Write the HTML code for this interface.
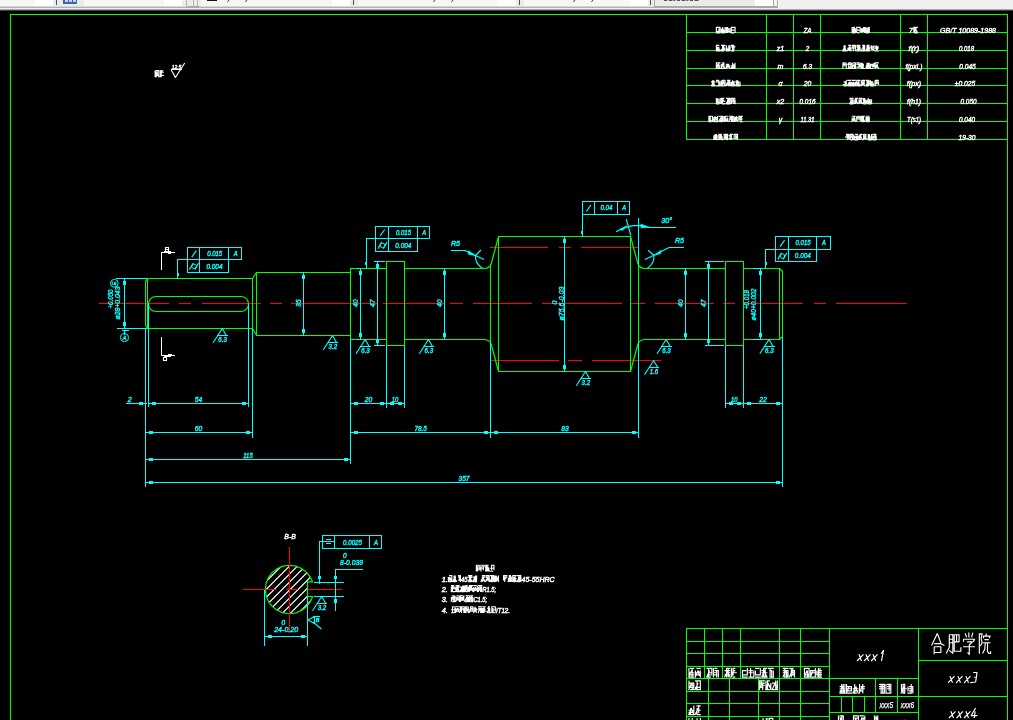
<!DOCTYPE html>
<html><head><meta charset="utf-8"><title>shaft drawing</title>
<style>
html,body{margin:0;padding:0;background:#000;overflow:hidden}
svg{display:block;will-change:transform;font-family:"Liberation Sans",sans-serif;font-style:italic}
.k{fill:none;stroke-width:1;shape-rendering:crispEdges}
.a{fill:none;stroke-width:1.15;stroke-linecap:butt;stroke-linejoin:round}
</style></head><body>
<svg width="1013" height="720" viewBox="0 0 1013 720">
<rect width="1013" height="720" fill="#000"/>
<rect x="0" y="0" width="1013" height="9" fill="#f0f0f0"/>
<rect x="0" y="0" width="53" height="6" fill="#f7f7f7"/>
<rect x="35" y="0" width="18" height="6" fill="#ffffff"/>
<rect x="84" y="0" width="98" height="6" fill="#f7f7f7"/>
<rect x="164" y="0" width="18" height="6" fill="#ffffff"/>
<rect x="201" y="0" width="149" height="6" fill="#f7f7f7"/>
<rect x="332" y="0" width="18" height="6" fill="#ffffff"/>
<rect x="358" y="0" width="158" height="6" fill="#f7f7f7"/>
<rect x="498" y="0" width="18" height="6" fill="#ffffff"/>
<rect x="524" y="0" width="124" height="6" fill="#f7f7f7"/>
<rect x="630" y="0" width="18" height="6" fill="#ffffff"/>
<rect x="0" y="6" width="778" height="1" fill="#d6d8da"/>
<rect x="0" y="7" width="778" height="1" fill="#b0b0b0"/>
<rect x="0" y="8" width="778" height="1" fill="#ececec"/>
<rect x="53" y="0" width="31" height="6" fill="#ececec"/>
<rect x="182" y="0" width="19" height="6" fill="#ececec"/>
<rect x="350" y="0" width="8" height="6" fill="#ececec"/>
<rect x="516" y="0" width="8" height="6" fill="#ececec"/>
<rect x="648" y="0" width="7" height="6" fill="#ececec"/>
<rect x="56" y="0" width="1" height="5" fill="#505050"/>
<rect x="353" y="0" width="1" height="5" fill="#505050"/>
<rect x="519" y="0" width="1" height="5" fill="#505050"/>
<rect x="650" y="0" width="1" height="5" fill="#505050"/>
<rect x="186" y="0" width="1" height="7" fill="#b4b4b4"/>
<rect x="193" y="0" width="1" height="7" fill="#b4b4b4"/>
<rect x="197" y="0" width="1" height="7" fill="#b4b4b4"/>
<rect x="188" y="6" width="11" height="2" fill="#a8a8a8"/>
<rect x="655" y="0" width="100" height="6" fill="#ebebeb"/><rect x="755" y="0" width="19" height="6" fill="#ffffff"/>
<rect x="654" y="0" width="1" height="7" fill="#a8a8a8"/><rect x="773" y="0" width="1" height="7" fill="#a8a8a8"/><rect x="777" y="0" width="1" height="8" fill="#a8a8a8"/><rect x="654" y="6" width="124" height="2" fill="#a8a8a8"/>
<rect x="774" y="0" width="3" height="6" fill="#f6f6f6"/><rect x="778" y="0" width="1" height="9" fill="#fbfbfb"/>
<rect x="63" y="0" width="14" height="4" fill="#3f62a0"/><rect x="65" y="0" width="3" height="2" fill="#c4d8f6"/><rect x="69" y="0" width="3" height="2" fill="#c4d8f6"/><rect x="73" y="0" width="3" height="2" fill="#c4d8f6"/>
<rect x="207" y="0" width="10" height="1" fill="#111"/>
<path d="M229 0l-1.6 2" stroke="#444" stroke-width="1" fill="none"/>
<path d="M247 0l-1.6 2" stroke="#444" stroke-width="1" fill="none"/>
<path d="M435 0l-1.6 2" stroke="#444" stroke-width="1" fill="none"/>
<path d="M453 0l-1.6 2" stroke="#444" stroke-width="1" fill="none"/>
<path d="M575 0l-1.6 2" stroke="#444" stroke-width="1" fill="none"/>
<path d="M593 0l-1.6 2" stroke="#444" stroke-width="1" fill="none"/>
<path d="M664 0.5H699" stroke="#555" stroke-width="1" stroke-dasharray="3 1.5 4 1 2 1.5"/>
<rect x="0" y="9" width="1013" height="1" fill="#a8a8a8"/>
<rect x="0" y="10" width="1013" height="1" fill="#404040"/>
<path class="k" stroke="#00ff00" d="M10 14.5H1008"/>
<path class="k" stroke="#00ff00" d="M10.5 14V720"/>
<path class="k" stroke="#00ff00" d="M1007.5 14V720"/>
<path class="k" stroke="#00ff00" d="M686 32.5H1008"/>
<path class="k" stroke="#00ff00" d="M686 50.5H1008"/>
<path class="k" stroke="#00ff00" d="M686 68.5H1008"/>
<path class="k" stroke="#00ff00" d="M686 85.5H1008"/>
<path class="k" stroke="#00ff00" d="M686 103.5H1008"/>
<path class="k" stroke="#00ff00" d="M686 121.5H1008"/>
<path class="k" stroke="#00ff00" d="M686 139.5H1008"/>
<path class="k" stroke="#00ff00" d="M686.5 14V140"/>
<path class="k" stroke="#00ff00" d="M766.5 14V140"/>
<path class="k" stroke="#00ff00" d="M793.5 14V140"/>
<path class="k" stroke="#00ff00" d="M820.5 14V140"/>
<path class="k" stroke="#00ff00" d="M900.5 14V140"/>
<path class="k" stroke="#00ff00" d="M927.5 14V140"/>
<path class="a" stroke="#ffffff" stroke-width="1" d="M716 27.34H720.4M716 31.48H719.3M716 32.86H720.4M718.82 28.6V33.1M716.35 27.1V33.1M720.05 27.1V31.9M721 30.1H725.4M721 31.48H724.3M721 32.86H724.3M722.58 27.1V31.9M725.05 27.1V33.1M721.35 28.6V33.1M723.42 28.6L721 33.1M722.98 29.2L725.4 33.1M726 28.72H730.4M726 30.1H729.3M727.1 31.48H730.4M730.05 28.6V33.1M726.35 27.1V33.1M727.58 27.1V33.1M728.42 28.6L726 33.1M731 27.34H735.4M731 30.1H734.3M731 32.86H734.3M731.35 27.1V33.1M735.05 27.1V33.1"/>
<path class="a" stroke="#ffffff" stroke-width="1" d="M716 45.44H719.3M716 48.2H719.3M717.1 49.58H720.4M716 50.96H720.4M717.58 46.7V51.2M716.35 45.2V50M718.82 46.7V50M718.42 46.7L716 51.2M717.98 47.3L720.4 51.2M721 45.44H725.4M722.1 48.2H725.4M721 49.58H725.4M721 50.96H724.3M722.58 45.2V51.2M723.82 45.2V50M723.42 46.7L721 51.2M726 48.2H729.3M726 49.58H730.4M726 50.96H729.3M726.35 45.2V51.2M730.05 45.2V51.2M728.82 45.2V51.2M731 45.44H734.3M731 46.82H735.4M731 50.96H734.3M733.82 45.2V51.2M732.58 45.2V51.2"/>
<path class="a" stroke="#ffffff" stroke-width="1" d="M716 62.94H720.4M716 65.7H720.4M716 68.46H719.3M717.58 64.2V67.5M718.82 62.7V68.7M716.35 62.7V68.7M718.42 64.2L716 68.7M717.98 64.8L720.4 68.7M722.1 62.94H724.3M721 64.32H724.3M721 68.46H725.4M721.35 64.2V68.7M723.82 62.7V68.7M723.42 64.2L721 68.7M722.98 64.8L725.4 68.7M726 64.32H729.3M727.1 65.7H730.4M727.1 67.08H730.4M726.35 64.2V68.7M727.58 64.2V67.5M728.42 64.2L726 68.7M727.98 64.8L730.4 68.7M731 65.7H734.3M732.1 67.08H735.4M731 68.46H734.3M733.82 64.2V68.7M732.58 62.7V68.7M735.05 62.7V68.7M733.42 64.2L731 68.7M732.98 64.8L735.4 68.7"/>
<path class="a" stroke="#ffffff" stroke-width="1" d="M711 81.82H715.4M712.1 83.2H714.3M711 85.96H715.4M712.58 80.2V86.2M713.82 80.2V86.2M713.42 81.7L711 86.2M712.98 82.3L715.4 86.2M716 80.44H719.3M716 81.82H720.4M716 85.96H720.4M720.05 81.7V86.2M718.82 81.7V86.2M722.1 80.44H725.4M722.1 81.82H724.3M722.1 83.2H725.4M721 85.96H724.3M722.58 80.2V85M725.05 80.2V86.2M721.35 80.2V86.2M723.42 81.7L721 86.2M722.98 82.3L725.4 86.2M727.1 80.44H730.4M727.1 81.82H730.4M726 83.2H729.3M726 84.58H730.4M730.05 81.7V86.2M728.82 80.2V86.2M728.42 81.7L726 86.2M727.98 82.3L730.4 86.2M732.1 81.82H735.4M732.1 84.58H735.4M731 85.96H734.3M733.82 81.7V85M732.58 80.2V85M731.35 81.7V85M733.42 81.7L731 86.2M732.98 82.3L735.4 86.2M736 81.82H739.3M736 83.2H739.3M737.1 84.58H739.3M736 85.96H740.4M737.58 80.2V85M740.05 81.7V86.2M736.35 80.2V86.2M738.42 81.7L736 86.2"/>
<path class="a" stroke="#ffffff" stroke-width="1" d="M716 99.72H719.3M716 101.1H719.3M716 102.48H720.4M716 103.86H719.3M720.05 98.1V104.1M716.35 98.1V104.1M717.58 98.1V102.9M721 98.34H724.3M721 101.1H725.4M722.1 103.86H725.4M721.35 98.1V104.1M722.58 98.1V102.9M723.42 99.6L721 104.1M726 98.34H730.4M727.1 99.72H730.4M727.1 101.1H729.3M726 103.86H730.4M727.58 99.6V104.1M730.05 98.1V104.1M728.82 98.1V104.1M728.42 99.6L726 104.1M727.98 100.2L730.4 104.1M731 98.34H735.4M732.1 99.72H734.3M732.1 101.1H735.4M735.05 99.6V104.1M733.82 98.1V104.1M731.35 98.1V104.1M733.42 99.6L731 104.1M732.98 100.2L735.4 104.1"/>
<path class="a" stroke="#ffffff" stroke-width="1" d="M708.5 116.24H712.9M708.5 120.38H711.8M708.5 121.76H711.8M710.08 116V120.8M708.85 116V122M712.55 116V122M710.92 117.5L708.5 122M713.5 117.62H717.9M714.6 119H716.8M713.5 121.76H717.9M717.55 116V120.8M715.08 116V122M713.85 117.5V122M715.92 117.5L713.5 122M715.48 118.1L717.9 122M718.5 116.24H722.9M719.6 120.38H722.9M719.6 121.76H721.8M721.32 116V122M722.55 116V122M720.92 117.5L718.5 122M720.48 118.1L722.9 122M724.6 116.24H727.9M723.5 119H726.8M723.5 120.38H727.9M723.85 116V122M727.55 117.5V122M725.08 116V122M725.92 117.5L723.5 122M725.48 118.1L727.9 122M728.5 116.24H732.9M729.6 117.62H732.9M728.5 119H732.9M731.32 116V122M732.55 116V122M730.92 117.5L728.5 122M730.48 118.1L732.9 122M734.6 117.62H737.9M733.5 119H737.9M734.6 120.38H737.9M733.85 116V120.8M736.32 116V120.8M735.08 117.5V122M735.92 117.5L733.5 122M735.48 118.1L737.9 122M738.5 116.24H742.9M738.5 117.62H741.8M739.6 119H742.9M739.6 121.76H742.9M738.85 116V120.8M740.08 116V120.8M741.32 116V120.8"/>
<path class="a" stroke="#ffffff" stroke-width="1" d="M713.5 135.72H717.9M713.5 137.1H717.9M714.6 138.48H716.8M715.08 134.1V140.1M716.32 134.1V140.1M713.85 135.6V140.1M715.92 135.6L713.5 140.1M715.48 136.2L717.9 140.1M718.5 134.34H721.8M719.6 135.72H721.8M718.5 137.1H722.9M721.32 134.1V140.1M718.85 134.1V140.1M720.08 134.1V140.1M720.92 135.6L718.5 140.1M720.48 136.2L722.9 140.1M723.5 134.34H727.9M723.5 135.72H726.8M723.5 137.1H727.9M723.5 138.48H727.9M726.32 134.1V140.1M725.08 134.1V138.9M727.55 134.1V138.9M725.92 135.6L723.5 140.1M725.48 136.2L727.9 140.1M729.6 134.34H732.9M728.5 135.72H731.8M728.5 138.48H732.9M730.08 134.1V140.1M731.32 134.1V140.1M733.5 134.34H737.9M733.5 135.72H736.8M733.5 137.1H736.8M733.5 138.48H737.9M737.55 134.1V140.1M736.32 135.6V138.9"/>
<text x="807.5" y="33.1" fill="#ffffff" stroke="#ffffff" stroke-width="0.42" font-size="7" text-anchor="middle" textLength="8" lengthAdjust="spacingAndGlyphs">ZA</text>
<text x="911" y="33.1" fill="#ffffff" stroke="#ffffff" stroke-width="0.42" font-size="7" text-anchor="middle">7</text>
<path class="a" stroke="#ffffff" stroke-width="1" d="M913.5 27.34H917.9M913.5 28.72H916.8M914.6 32.86H917.9M913.85 27.1V33.1M915.08 27.1V33.1M915.92 28.6L913.5 33.1M915.48 29.2L917.9 33.1"/>
<text x="968" y="33.1" fill="#ffffff" stroke="#ffffff" stroke-width="0.42" font-size="7" text-anchor="middle" textLength="56" lengthAdjust="spacingAndGlyphs">GB/T 10089-1988</text>
<path class="a" stroke="#ffffff" stroke-width="1" d="M852.8 27.34H854.8M852.8 28.72H855.8M851.8 31.48H855.8M851.8 32.86H854.8M852.12 27.1V31.9M854.36 27.1V31.9M855.48 28.6V33.1M854 28.6L851.8 33.1M853.6 29.2L855.8 33.1M856.4 27.34H860.4M856.4 30.1H859.4M857.4 32.86H859.4M860.08 27.1V31.9M856.72 27.1V33.1M861 28.72H865M861 30.1H864M861 31.48H865M861.32 28.6V31.9M864.68 27.1V33.1M863.56 27.1V31.9M863.2 28.6L861 33.1M865.6 28.72H869.6M865.6 31.48H868.6M865.6 32.86H868.6M868.16 27.1V33.1M869.28 27.1V31.9M865.92 27.1V33.1M867.8 28.6L865.6 33.1M867.4 29.2L869.6 33.1"/>
<text x="780.5" y="51.2" fill="#ffffff" stroke="#ffffff" stroke-width="0.42" font-size="7" text-anchor="middle">z1</text>
<text x="807.5" y="51.2" fill="#ffffff" stroke="#ffffff" stroke-width="0.42" font-size="7" text-anchor="middle" textLength="3.5" lengthAdjust="spacingAndGlyphs">2</text>
<text x="914" y="51.2" fill="#ffffff" stroke="#ffffff" stroke-width="0.42" font-size="7" text-anchor="middle" textLength="11" lengthAdjust="spacingAndGlyphs">f(r)</text>
<text x="966.5" y="51.2" fill="#ffffff" stroke="#ffffff" stroke-width="0.42" font-size="7" text-anchor="middle" textLength="15" lengthAdjust="spacingAndGlyphs">0.018</text>
<path class="a" stroke="#ffffff" stroke-width="1" d="M843.6 46.82H845.6M842.6 49.58H845.6M842.6 50.96H846.6M844.04 45.2V51.2M845.16 45.2V51.2M844.8 46.7L842.6 51.2M844.4 47.3L846.6 51.2M848.2 45.44H851.2M847.2 48.2H851.2M848.2 49.58H851.2M849.76 45.2V51.2M850.88 46.7V50M849.4 46.7L847.2 51.2M849 47.3L851.2 51.2M851.8 45.44H855.8M851.8 46.82H855.8M851.8 48.2H854.8M853.24 45.2V51.2M855.48 45.2V51.2M856.4 45.44H860.4M856.4 46.82H860.4M856.4 49.58H860.4M856.4 50.96H859.4M860.08 46.7V51.2M858.96 45.2V50M857.84 45.2V51.2M862 45.44H865M862 48.2H864M861 50.96H865M864.68 45.2V51.2M863.56 45.2V51.2M863.2 46.7L861 51.2M866.6 45.44H869.6M866.6 46.82H869.6M866.6 49.58H869.6M865.6 50.96H869.6M869.28 46.7V51.2M867.04 45.2V50M868.16 45.2V51.2M867.8 46.7L865.6 51.2M867.4 47.3L869.6 51.2M870.2 46.82H874.2M870.2 48.2H873.2M871.2 49.58H873.2M873.88 45.2V51.2M871.64 45.2V50M874.8 46.82H878.8M874.8 48.2H878.8M874.8 50.96H878.8M876.24 45.2V50M877.36 46.7V50"/>
<text x="780.5" y="68.7" fill="#ffffff" stroke="#ffffff" stroke-width="0.42" font-size="7" text-anchor="middle">m</text>
<text x="807.5" y="68.7" fill="#ffffff" stroke="#ffffff" stroke-width="0.42" font-size="7" text-anchor="middle" textLength="9" lengthAdjust="spacingAndGlyphs">6.3</text>
<text x="914" y="68.7" fill="#ffffff" stroke="#ffffff" stroke-width="0.42" font-size="7" text-anchor="middle" textLength="17" lengthAdjust="spacingAndGlyphs">f(pxL)</text>
<text x="967.5" y="68.7" fill="#ffffff" stroke="#ffffff" stroke-width="0.42" font-size="7" text-anchor="middle" textLength="16.5" lengthAdjust="spacingAndGlyphs">0.045</text>
<path class="a" stroke="#ffffff" stroke-width="1" d="M842.6 62.94H845.6M842.6 64.32H845.6M843.6 65.7H845.6M846.28 62.7V68.7M842.92 62.7V68.7M848.2 62.94H851.2M847.2 64.32H851.2M848.2 67.08H851.2M847.2 68.46H851.2M848.64 62.7V68.7M850.88 62.7V68.7M852.8 62.94H855.8M852.8 65.7H855.8M851.8 68.46H855.8M854.36 64.2V68.7M855.48 62.7V67.5M852.12 62.7V68.7M854 64.2L851.8 68.7M853.6 64.8L855.8 68.7M856.4 62.94H859.4M856.4 64.32H860.4M856.4 67.08H860.4M858.96 64.2V67.5M860.08 62.7V67.5M861 64.32H864M862 65.7H864M861 67.08H864M861 68.46H865M861.32 62.7V68.7M862.44 62.7V68.7M863.2 64.2L861 68.7M865.6 65.7H869.6M865.6 67.08H869.6M865.6 68.46H868.6M869.28 62.7V68.7M868.16 62.7V67.5M867.04 62.7V68.7M867.8 64.2L865.6 68.7M867.4 64.8L869.6 68.7M870.2 64.32H873.2M870.2 65.7H874.2M870.2 68.46H873.2M872.76 64.2V67.5M873.88 62.7V67.5M870.52 64.2V68.7M874.8 62.94H878.8M875.8 65.7H877.8M874.8 67.08H877.8M875.12 62.7V67.5M877.36 64.2V67.5M877 64.2L874.8 68.7M876.6 64.8L878.8 68.7"/>
<text x="780.5" y="86.2" fill="#ffffff" stroke="#ffffff" stroke-width="0.42" font-size="7" text-anchor="middle">α</text>
<text x="807.5" y="86.2" fill="#ffffff" stroke="#ffffff" stroke-width="0.42" font-size="7" text-anchor="middle" textLength="7.5" lengthAdjust="spacingAndGlyphs">20</text>
<text x="914" y="86.2" fill="#ffffff" stroke="#ffffff" stroke-width="0.42" font-size="7" text-anchor="middle" textLength="14.5" lengthAdjust="spacingAndGlyphs">f(px)</text>
<text x="965" y="86.2" fill="#ffffff" stroke="#ffffff" stroke-width="0.42" font-size="7" text-anchor="middle" textLength="20.5" lengthAdjust="spacingAndGlyphs">±0.025</text>
<path class="a" stroke="#ffffff" stroke-width="1" d="M843.6 81.82H845.6M842.6 84.58H846.6M843.6 85.96H846.6M846.28 80.2V85M845.16 81.7V86.2M847.2 80.44H851.2M847.2 84.58H851.2M848.2 85.96H851.2M850.88 81.7V86.2M849.76 81.7V86.2M849.4 81.7L847.2 86.2M849 82.3L851.2 86.2M851.8 80.44H855.8M851.8 84.58H855.8M851.8 85.96H854.8M852.12 81.7V86.2M855.48 81.7V85M854 81.7L851.8 86.2M853.6 82.3L855.8 86.2M856.4 80.44H860.4M856.4 84.58H860.4M857.4 85.96H860.4M857.84 81.7V85M858.96 80.2V86.2M856.72 80.2V85M858.6 81.7L856.4 86.2M858.2 82.3L860.4 86.2M862 80.44H865M861 81.82H865M862 83.2H865M862 84.58H864M863.56 81.7V85M861.32 80.2V86.2M863.2 81.7L861 86.2M862.8 82.3L865 86.2M865.6 80.44H868.6M865.6 84.58H869.6M865.6 85.96H868.6M868.16 80.2V86.2M869.28 80.2V85M867.04 80.2V86.2M870.2 81.82H873.2M871.2 83.2H874.2M870.2 84.58H874.2M870.2 85.96H874.2M871.64 81.7V85M870.52 80.2V85M872.4 81.7L870.2 86.2M874.8 80.44H878.8M874.8 81.82H878.8M874.8 83.2H878.8M875.12 80.2V85M878.48 81.7V85M877 81.7L874.8 86.2"/>
<text x="780.5" y="104.1" fill="#ffffff" stroke="#ffffff" stroke-width="0.42" font-size="7" text-anchor="middle">x2</text>
<text x="807.5" y="104.1" fill="#ffffff" stroke="#ffffff" stroke-width="0.42" font-size="7" text-anchor="middle" textLength="16" lengthAdjust="spacingAndGlyphs">0.016</text>
<text x="914" y="104.1" fill="#ffffff" stroke="#ffffff" stroke-width="0.42" font-size="7" text-anchor="middle" textLength="14" lengthAdjust="spacingAndGlyphs">f(h1)</text>
<text x="968.5" y="104.1" fill="#ffffff" stroke="#ffffff" stroke-width="0.42" font-size="7" text-anchor="middle" textLength="16" lengthAdjust="spacingAndGlyphs">0.050</text>
<path class="a" stroke="#ffffff" stroke-width="1" d="M849.5 98.34H853.5M849.5 99.72H853.5M849.5 102.48H852.5M849.5 103.86H853.5M852.06 99.6V104.1M853.18 99.6V104.1M851.7 99.6L849.5 104.1M851.3 100.2L853.5 104.1M855.1 98.34H858.1M854.1 99.72H857.1M854.1 101.1H857.1M856.66 98.1V102.9M855.54 98.1V104.1M856.3 99.6L854.1 104.1M855.9 100.2L858.1 104.1M858.7 98.34H862.7M858.7 99.72H862.7M859.7 102.48H862.7M859.02 99.6V104.1M861.26 99.6V104.1M860.9 99.6L858.7 104.1M860.5 100.2L862.7 104.1M864.3 101.1H867.3M863.3 102.48H867.3M863.3 103.86H866.3M863.62 98.1V104.1M864.74 98.1V102.9M866.98 99.6V102.9M865.5 99.6L863.3 104.1M865.1 100.2L867.3 104.1M867.9 99.72H871.9M867.9 102.48H871.9M867.9 103.86H870.9M871.58 99.6V102.9M868.22 98.1V104.1M870.1 99.6L867.9 104.1M869.7 100.2L871.9 104.1"/>
<text x="780.5" y="122" fill="#ffffff" stroke="#ffffff" stroke-width="0.42" font-size="7" text-anchor="middle">γ</text>
<text x="807.5" y="122" fill="#ffffff" stroke="#ffffff" stroke-width="0.42" font-size="7" text-anchor="middle" textLength="14" lengthAdjust="spacingAndGlyphs">11.31</text>
<text x="914" y="122" fill="#ffffff" stroke="#ffffff" stroke-width="0.42" font-size="7" text-anchor="middle" textLength="14" lengthAdjust="spacingAndGlyphs">T(s1)</text>
<text x="967" y="122" fill="#ffffff" stroke="#ffffff" stroke-width="0.42" font-size="7" text-anchor="middle" textLength="16" lengthAdjust="spacingAndGlyphs">0.040</text>
<path class="a" stroke="#ffffff" stroke-width="1" d="M851.8 116.24H855.8M851.8 119H855.8M851.8 120.38H855.8M854.36 116V120.8M852.12 117.5V122M854 117.5L851.8 122M853.6 118.1L855.8 122M857.4 116.24H860.4M856.4 117.62H859.4M856.4 119H860.4M856.72 116V122M860.08 116V120.8M861 116.24H865M861 120.38H864M862 121.76H864M861.32 116V122M862.44 116V120.8M863.56 116V122M863.2 117.5L861 122M862.8 118.1L865 122M865.6 116.24H869.6M865.6 117.62H869.6M866.6 120.38H869.6M866.6 121.76H869.6M865.92 117.5V120.8M868.16 117.5V120.8M869.28 117.5V122M867.8 117.5L865.6 122M867.4 118.1L869.6 122"/>
<text x="967" y="140.1" fill="#ffffff" stroke="#ffffff" stroke-width="0.42" font-size="7" text-anchor="middle" textLength="17" lengthAdjust="spacingAndGlyphs">19-30</text>
<path class="a" stroke="#ffffff" stroke-width="1" d="M845.9 134.34H848.9M845.9 135.72H847.9M844.9 137.1H848.9M847.46 134.1V140.1M848.58 134.1V138.9M849.5 134.34H853.5M849.5 135.72H853.5M849.5 137.1H853.5M850.5 139.86H852.5M853.18 134.1V138.9M849.82 134.1V138.9M851.7 135.6L849.5 140.1M851.3 136.2L853.5 140.1M855.1 134.34H858.1M854.1 137.1H858.1M854.1 139.86H858.1M856.66 135.6V140.1M854.42 135.6V138.9M857.78 135.6V138.9M856.3 135.6L854.1 140.1M855.9 136.2L858.1 140.1M859.7 134.34H862.7M858.7 135.72H861.7M859.7 137.1H861.7M860.14 134.1V140.1M859.02 135.6V140.1M860.9 135.6L858.7 140.1M860.5 136.2L862.7 140.1M864.3 134.34H866.3M863.3 135.72H866.3M864.3 137.1H866.3M863.3 138.48H867.3M865.86 134.1V140.1M863.62 134.1V138.9M865.5 135.6L863.3 140.1M868.9 137.1H871.9M867.9 138.48H870.9M867.9 139.86H871.9M871.58 134.1V140.1M868.22 134.1V140.1M869.34 134.1V140.1M870.1 135.6L867.9 140.1M872.5 134.34H876.5M872.5 137.1H876.5M872.5 139.86H876.5M872.82 135.6V140.1M876.18 135.6V140.1M875.06 134.1V138.9M874.7 135.6L872.5 140.1M874.3 136.2L876.5 140.1"/>
<path class="k" stroke="#00ff00" d="M686 628.5H830"/>
<path class="k" stroke="#00ff00" d="M686 641.5H830"/>
<path class="k" stroke="#00ff00" d="M686 653.5H830"/>
<path class="k" stroke="#00ff00" d="M686 666.5H830"/>
<path class="k" stroke="#00ff00" d="M686 678.5H830"/>
<path class="k" stroke="#00ff00" d="M686 691.5H830"/>
<path class="k" stroke="#00ff00" d="M686 703.5H830"/>
<path class="k" stroke="#00ff00" d="M686 716.5H830"/>
<path class="k" stroke="#00ff00" d="M829 628.5H1008"/>
<path class="k" stroke="#00ff00" d="M686.5 628V720"/>
<path class="k" stroke="#00ff00" d="M779.5 628V720"/>
<path class="k" stroke="#00ff00" d="M800.5 628V720"/>
<path class="k" stroke="#00ff00" d="M829.5 628V720"/>
<path class="k" stroke="#00ff00" d="M704.5 628V679"/>
<path class="k" stroke="#00ff00" d="M722.5 628V679"/>
<path class="k" stroke="#00ff00" d="M740.5 628V679"/>
<path class="k" stroke="#00ff00" d="M708.5 678V720"/>
<path class="k" stroke="#00ff00" d="M729.5 678V720"/>
<path class="k" stroke="#00ff00" d="M758.5 678V720"/>
<path class="k" stroke="#00ff00" d="M918.5 628V720"/>
<path class="k" stroke="#00ff00" d="M918 660.5H1008"/>
<path class="k" stroke="#00ff00" d="M829 678.5H919"/>
<path class="k" stroke="#00ff00" d="M829 696.5H1008"/>
<path class="k" stroke="#00ff00" d="M829 712.5H919"/>
<path class="k" stroke="#00ff00" d="M875.5 678V713"/>
<path class="k" stroke="#00ff00" d="M897.5 678V713"/>
<path class="k" stroke="#00ff00" d="M841.5 696V713"/>
<path class="k" stroke="#00ff00" d="M852.5 696V713"/>
<path class="k" stroke="#00ff00" d="M864.5 696V713"/>
<path class="a" stroke="#ffffff" stroke-width="1.15" d="M858.9 654.3L861.5 661M863.5 654.3L857 661M865.95 654.3L868.55 661M870.55 654.3L864.05 661M873 654.3L875.6 661M877.6 654.3L871.1 661M881.3 653.7L883.5 650.4L881.5 661"/>
<path class="a" stroke="#ffffff" stroke-width="1.15" d="M949.9 676.1L952.5 682.8M954.5 676.1L948 682.8M957.9 676.1L960.5 682.8M962.5 676.1L956 682.8M965.9 676.1L968.5 682.8M970.5 676.1L964 682.8M973.1 672.5L977 672.5L976.4 677.2L974.2 677.2M976.4 677.2L975.6 682L970 682.7"/>
<path class="a" stroke="#ffffff" stroke-width="1.15" d="M950.9 711.3L953.5 718M955.5 711.3L949 718M958.4 711.3L961 718M963 711.3L956.5 718M965.9 711.3L968.5 718M970.5 711.3L964 718M975.6 708L971.2 715.6L977.4 715.6M975.2 711.4L974.2 718"/>
<text x="886.3" y="707.8" fill="#ffffff" stroke="#ffffff" stroke-width="0.25" font-size="8.5" text-anchor="middle" textLength="13.5" lengthAdjust="spacingAndGlyphs">xxx5</text>
<text x="907.5" y="707.8" fill="#ffffff" stroke="#ffffff" stroke-width="0.25" font-size="8.5" text-anchor="middle" textLength="13.5" lengthAdjust="spacingAndGlyphs">xxx6</text>
<path class="a" stroke="#ffffff" stroke-width="1.1" d="M689.95 668.38H694.3M688.5 672.75H694.3M689.95 674.93H694.3M688.5 677.12H694.3M692.21 668V677.5M688.96 668V675.6M691.69 670.38L688.5 677.5M696.45 668.38H700.8M695 672.75H700.8M695 674.93H700.8M698.71 670.38V675.6M695.46 670.38V677.5M700.34 670.38V677.5M698.19 670.38L695 677.5M697.61 671.33L700.8 677.5"/>
<path class="a" stroke="#ffffff" stroke-width="1.1" d="M706.5 668.38H712.3M707.95 672.75H712.3M707.95 674.93H710.85M706.5 677.12H710.85M711.84 668V675.6M708.59 668V677.5M709.69 670.38L706.5 677.5M714.45 668.38H717.35M714.45 670.57H718.8M713 672.75H717.35M713 674.93H717.35M713.46 668V677.5M718.34 670.38V677.5M716.71 670.38V677.5"/>
<path class="a" stroke="#ffffff" stroke-width="1.1" d="M725.95 668.38H730.3M724.5 670.57H730.3M725.95 672.75H730.3M724.5 674.93H730.3M726.59 668V677.5M728.21 668V677.5M727.69 670.38L724.5 677.5M727.11 671.33L730.3 677.5M732.45 668.38H735.35M732.45 670.57H735.35M731 672.75H736.8M732.45 677.12H735.35M731.46 668V675.6M733.09 668V675.6M734.19 670.38L731 677.5"/>
<path class="a" stroke="#ffffff" stroke-width="1.1" d="M742 670.57H746.35M742 674.93H747.8M742 677.12H747.8M742.46 670.38V677.5M747.34 668V675.6M748.5 670.57H752.85M748.5 672.75H752.85M748.5 677.12H754.3M753.84 670.38V677.5M750.59 668V677.5M755 668.38H759.35M755 674.93H760.8M755 677.12H760.8M755.46 670.38V675.6M760.34 668V675.6M762.95 668.38H767.3M761.5 670.57H765.85M761.5 672.75H767.3M761.5 677.12H767.3M763.59 668V677.5M765.21 668V677.5M764.69 670.38L761.5 677.5M764.11 671.33L767.3 677.5M768 668.38H773.8M769.45 670.57H772.35M769.45 677.12H773.8M770.09 668V677.5M771.71 670.38V677.5M773.34 670.38V677.5"/>
<path class="a" stroke="#ffffff" stroke-width="1.1" d="M782.7 668.38H788.5M782.7 670.57H788.5M782.7 672.75H788.5M784.15 677.12H788.5M784.79 668V677.5M788.04 670.38V677.5M786.41 670.38V677.5M785.89 670.38L782.7 677.5M785.31 671.33L788.5 677.5M789.2 668.38H793.55M790.65 670.57H795M790.65 672.75H795M790.65 674.93H793.55M794.54 670.38V675.6M792.91 668V675.6M791.29 668V677.5M792.39 670.38L789.2 677.5M791.81 671.33L795 677.5"/>
<path class="a" stroke="#ffffff" stroke-width="1.1" d="M804 668.38H809.6M804 674.93H809.6M804 677.12H809.6M807.58 670.38V677.5M809.15 668V675.6M804.45 668V675.6M807.08 670.38L804 677.5M806.52 671.33L809.6 677.5M810.2 670.57H815.8M810.2 672.75H815.8M810.2 677.12H815.8M815.35 668V677.5M810.65 670.38V677.5M813.28 670.38L810.2 677.5M817.8 670.57H822M816.4 672.75H822M816.4 674.93H822M816.4 677.12H822M818.42 668V677.5M816.85 670.38V675.6M819.98 668V677.5"/>
<path class="a" stroke="#ffffff" stroke-width="1.1" d="M688.5 683.07H694.3M689.95 685.25H694.3M688.5 687.43H694.3M689.95 689.62H694.3M692.21 682.88V690M688.96 680.5V688.1M693.84 682.88V690M691.69 682.88L688.5 690M695 680.88H700.8M695 687.43H700.8M695 689.62H700.8M697.09 680.5V690M700.34 680.5V690M698.19 682.88L695 690"/>
<path class="a" stroke="#ffffff" stroke-width="1.1" d="M759 680.88H764.8M759 683.07H764.8M759 685.25H764.8M759 687.43H763.35M761.09 680.5V688.1M759.46 680.5V690M762.71 682.88V690M762.19 682.88L759 690M766.95 680.88H769.85M765.5 685.25H771.3M765.5 689.62H769.85M767.59 680.5V690M765.96 680.5V690M770.84 682.88V690M768.69 682.88L765.5 690M768.11 683.83L771.3 690M772 683.07H776.35M773.45 685.25H777.8M772 689.62H777.8M775.71 680.5V690M777.34 680.5V688.1M775.19 682.88L772 690M774.61 683.83L777.8 690"/>
<path class="a" stroke="#ffffff" stroke-width="1.1" d="M688.5 710.25H694.3M688.5 712.43H692.85M688.5 714.62H694.3M690.59 707.88V715M693.84 705.5V713.1M691.69 707.88L688.5 715M691.11 708.83L694.3 715M696.45 705.88H700.8M696.45 710.25H700.8M696.45 714.62H700.8M697.09 707.88V715M698.71 705.5V713.1M698.19 707.88L695 715"/>
<path class="a" stroke="#ffffff" stroke-width="1.1" d="M689.95 720.57H692.85M689.95 722.75H694.3M689.95 724.93H694.3M689.95 727.12H694.3M688.96 718V727.5M692.21 718V725.6M691.69 720.38L688.5 727.5M691.11 721.33L694.3 727.5M695 720.57H700.8M696.45 722.75H700.8M695 724.93H699.35M695 727.12H700.8M697.09 718V727.5M700.34 718V727.5"/>
<path class="a" stroke="#ffffff" stroke-width="1.1" d="M761 720.57H765.35M761 724.93H765.35M761 727.12H765.35M763.09 718V727.5M761.46 720.38V727.5M766.34 718V727.5M764.19 720.38L761 727.5M768.95 718.38H773.3M768.95 722.75H773.3M767.5 724.93H773.3M767.96 718V727.5M769.59 718V727.5M772.84 718V725.6M770.69 720.38L767.5 727.5M770.11 721.33L773.3 727.5"/>
<path class="a" stroke="#ffffff" stroke-width="1.1" d="M839.6 686.57H843.95M839.6 688.75H845.4M839.6 690.93H843.95M839.6 693.12H845.4M841.69 684V693.5M843.31 684V693.5M844.94 684V691.6M842.79 686.38L839.6 693.5M842.21 687.33L845.4 693.5M846.1 686.57H851.9M846.1 688.75H851.9M847.55 690.93H851.9M846.1 693.12H851.9M846.56 684V693.5M851.44 686.38V691.6M849.29 686.38L846.1 693.5M852.6 688.75H858.4M854.05 690.93H858.4M852.6 693.12H856.95M854.69 684V693.5M856.31 686.38V691.6M855.79 686.38L852.6 693.5M855.21 687.33L858.4 693.5M860.55 686.57H864.9M860.55 688.75H864.9M859.1 690.93H863.45M859.56 684V693.5M862.81 684V693.5M862.29 686.38L859.1 693.5"/>
<path class="a" stroke="#ffffff" stroke-width="1.1" d="M879 684.38H884.8M879 686.57H884.8M879 688.75H884.8M880.45 693.12H884.8M882.71 684V693.5M881.09 684V693.5M884.34 684V693.5M886.95 684.38H891.3M886.95 686.57H891.3M886.95 688.75H891.3M885.5 693.12H891.3M889.21 684V691.6M890.84 684V693.5M885.96 684V693.5"/>
<path class="a" stroke="#ffffff" stroke-width="1.1" d="M902.45 684.38H905.35M901 688.75H906.8M902.45 690.93H905.35M902.45 693.12H905.35M901.46 684V691.6M904.71 684V693.5M903.09 684V693.5M904.19 686.38L901 693.5M908.95 686.57H913.3M907.5 688.75H913.3M908.95 690.93H913.3M907.5 693.12H911.85M907.96 686.38V691.6M912.84 686.38V693.5M911.21 684V693.5"/>
<path class="a" stroke="#ffffff" stroke-width="1.1" d="M839.45 715.88H843.8M839.45 718.07H842.35M838 724.62H842.35M843.34 715.5V725M838.46 715.5V725M841.71 715.5V723.1M841.19 717.88L838 725M840.61 718.83L843.8 725"/>
<path class="a" stroke="#ffffff" stroke-width="1.1" d="M853 715.88H858.8M853 718.07H858.8M854.45 722.43H858.8M858.34 715.5V723.1M853.46 715.5V725M856.19 717.88L853 725M855.61 718.83L858.8 725M859.5 715.88H863.85M860.95 718.07H865.3M859.5 720.25H865.3M860.95 724.62H865.3M861.59 717.88V725M863.21 717.88V725M864.84 715.5V725"/>
<path class="a" stroke="#ffffff" stroke-width="1.1" d="M874 718.07H878.35M874 722.43H878.35M874 724.62H878.35M877.71 715.5V725M876.09 715.5V725M874.46 715.5V725M877.19 717.88L874 725"/>
<text x="905" y="724.5" fill="#ffffff" stroke="#ffffff" stroke-width="0.42" font-size="8" text-anchor="middle">9</text>
<path class="a" stroke="#ffffff" stroke-width="1.2" d="M937.32 633.44 L931.55 645.43M937.32 633.44 L941.31 644.09 L944.42 645.43M934.21 643.65 L941.31 643.65M934.21 646.76 L934.21 654.31M934.21 646.76 L940.87 646.76 L940.87 652.53 L934.21 652.53M949.31 634.77 L949.31 647.2 L946.2 653.42M949.31 634.77 L952.86 634.77M952.86 633.88 L952.86 653.42 L949.31 650.31M949.31 639.21 L952.86 639.21M949.31 642.76 L952.86 642.76M954.19 634.77 L959.08 634.77 L959.08 641.87 L954.19 641.87M954.19 634.77 L954.19 651.2 L960.85 651.2 L960.85 647.2M956.59 634.77 L956.59 641.87M965.29 633.44 L966.63 637.43M968.85 632.55 L968.85 637.43M972.84 632.55 L971.51 637.43M963.52 641.87 L963.52 639.21 L974.62 639.21 L973.29 641.87M967.07 641.87 L972.4 641.87 L969.29 644.98 L969.29 654.31 L967.51 652.53M963.07 646.76 L975.06 646.76M979.33 633.44 L979.33 653.86M979.33 633.88 L982.17 633.88 L981.1 638.32 L982.17 642.76 L980.39 645.87M986.16 633.44 L986.16 635.66M983.5 638.32 L983.5 636.1 L990.16 636.1 L989.27 638.32M984.39 639.65 L988.83 639.65M983.06 642.76 L990.6 642.76M985.28 642.76 L984.83 648.98 L982.61 653.42M987.5 642.76 L987.5 651.64 L988.83 653.42 L990.6 653.42 L990.6 651.2"/>
<path class="k" stroke="#ff0000" d="M99 303.5H169"/>
<path class="k" stroke="#ff0000" d="M179 303.5H191"/>
<path class="k" stroke="#ff0000" d="M202 303.5H261"/>
<path class="k" stroke="#ff0000" d="M270 303.5H282"/>
<path class="k" stroke="#ff0000" d="M291 303.5H377"/>
<path class="k" stroke="#ff0000" d="M383 303.5H445"/>
<path class="k" stroke="#ff0000" d="M450 303.5H463"/>
<path class="k" stroke="#ff0000" d="M473 303.5H532"/>
<path class="k" stroke="#ff0000" d="M542 303.5H622"/>
<path class="k" stroke="#ff0000" d="M631 303.5H645"/>
<path class="k" stroke="#ff0000" d="M655 303.5H714"/>
<path class="k" stroke="#ff0000" d="M723 303.5H735"/>
<path class="k" stroke="#ff0000" d="M744 303.5H803"/>
<path class="k" stroke="#ff0000" d="M814 303.5H826"/>
<path class="k" stroke="#ff0000" d="M836 303.5H907"/>
<path class="k" stroke="#ff0000" d="M490 247.5H548"/>
<path class="k" stroke="#ff0000" d="M559 247.5H571"/>
<path class="k" stroke="#ff0000" d="M581 247.5H639"/>
<path class="k" stroke="#ff0000" d="M490 360.5H559"/>
<path class="k" stroke="#ff0000" d="M568 360.5H582"/>
<path class="k" stroke="#ff0000" d="M592 360.5H661"/>
<path class="k" stroke="#00ff00" d="M145.5 281V326"/>
<path class="k" stroke="#00ff00" d="M147.5 278V329"/>
<path class="a" stroke="#00ff00" d="M147.5 278.5 L145.5 281.5"/>
<path class="a" stroke="#00ff00" d="M147.5 328.5 L145.5 325.5"/>
<path class="k" stroke="#00ff00" d="M147 278.5H253"/>
<path class="k" stroke="#00ff00" d="M147 328.5H253"/>
<path class="k" stroke="#00ff00" d="M252.5 278V329"/>
<path class="a" stroke="#00ff00" d="M252.5 278.5 L256.5 272.5"/>
<path class="a" stroke="#00ff00" d="M252.5 328.5 L256.5 335.5"/>
<path class="k" stroke="#00ff00" d="M256.5 272V336"/>
<path class="k" stroke="#00ff00" d="M256 272.5H351"/>
<path class="k" stroke="#00ff00" d="M256 335.5H351"/>
<path class="k" stroke="#00ff00" d="M350.5 268V340"/>
<path class="k" stroke="#00ff00" d="M350 268.5H387"/>
<path class="k" stroke="#00ff00" d="M350 339.5H387"/>
<path class="k" stroke="#00ff00" d="M386.5 261V346"/>
<path class="k" stroke="#00ff00" d="M404.5 261V346"/>
<path class="k" stroke="#00ff00" d="M386 261.5H405"/>
<path class="k" stroke="#00ff00" d="M386 345.5H405"/>
<path class="k" stroke="#00ff00" d="M404 268.5H485"/>
<path class="k" stroke="#00ff00" d="M404 339.5H485"/>
<path class="a" stroke="#00ff00" d="M156 296.5H241A7.5 7.5 0 0 1 241 311.5H156A7.5 7.5 0 0 1 156 296.5Z"/>
<path class="k" stroke="#00ff00" d="M498 236.5H631"/>
<path class="k" stroke="#00ff00" d="M498 371.5H631"/>
<path class="k" stroke="#00ff00" d="M498.5 236V372"/>
<path class="k" stroke="#00ff00" d="M630.5 236V372"/>
<path class="k" stroke="#00ff00" d="M490.5 264V344"/>
<path class="k" stroke="#00ff00" d="M638.5 264V344"/>
<path class="a" stroke="#00ff00" d="M484.5 268.5C488.5 268.3 490.3 266.5 491.3 263.5L498.5 236.5"/>
<path class="a" stroke="#00ff00" d="M484.5 339.5C488.5 339.7 490.3 341.5 491.3 344.5L498.5 371.5"/>
<path class="a" stroke="#00ff00" d="M644.5 268.5C640.5 268.3 638.8 266.5 637.8 263.5L630.5 236.5"/>
<path class="a" stroke="#00ff00" d="M644.5 339.5C640.5 339.7 638.8 341.5 637.8 344.5L630.5 371.5"/>
<path class="k" stroke="#00ff00" d="M644 268.5H726"/>
<path class="k" stroke="#00ff00" d="M644 339.5H726"/>
<path class="k" stroke="#00ff00" d="M725.5 261V346"/>
<path class="k" stroke="#00ff00" d="M743.5 261V346"/>
<path class="k" stroke="#00ff00" d="M725 261.5H744"/>
<path class="k" stroke="#00ff00" d="M725 345.5H744"/>
<path class="k" stroke="#00ff00" d="M743 268.5H780"/>
<path class="k" stroke="#00ff00" d="M743 339.5H780"/>
<path class="k" stroke="#00ff00" d="M779.5 268V340"/>
<path class="k" stroke="#00ff00" d="M782.5 271V337"/>
<path class="a" stroke="#00ff00" d="M779.5 268.5 L782.5 271.5"/>
<path class="a" stroke="#00ff00" d="M779.5 339.5 L782.5 336.5"/>
<path class="k" stroke="#00ffff" d="M116 278.5H147"/>
<path class="k" stroke="#00ffff" d="M117 328.5H147"/>
<path class="k" stroke="#00ffff" d="M124.5 278V329"/>
<rect x="123" y="281" width="3" height="4" fill="#00ffff"/>
<rect x="123" y="322" width="3" height="4" fill="#00ffff"/>
<circle cx="114.3" cy="283.3" r="3.9" fill="none" stroke="#00ffff"/>
<text x="116.2" y="283.4" fill="#00ffff" stroke="#00ffff" stroke-width="0.42" font-size="5.5" text-anchor="middle" transform="rotate(-90 116.2 283.4)">E</text>
<text x="112.5" y="299" fill="#00ffff" stroke="#00ffff" stroke-width="0.42" font-size="7" text-anchor="middle" textLength="19" lengthAdjust="spacingAndGlyphs" transform="rotate(-90 112.5 299)">+0.050</text>
<text x="120.3" y="303" fill="#00ffff" stroke="#00ffff" stroke-width="0.42" font-size="7" text-anchor="middle" textLength="33" lengthAdjust="spacingAndGlyphs" transform="rotate(-90 120.3 303)">ø28+0.043</text>
<path class="k" stroke="#00ffff" d="M122 330.5H129"/>
<path class="k" stroke="#00ffff" d="M124.5 330V335"/>
<circle cx="124.6" cy="337.6" r="4" fill="none" stroke="#00ffff"/>
<text x="124.6" y="340" fill="#00ffff" stroke="#00ffff" stroke-width="0.42" font-size="6" text-anchor="middle">A</text>
<path class="k" stroke="#00ffff" d="M303.5 272V336"/>
<rect x="302" y="275" width="3" height="4" fill="#00ffff"/>
<rect x="302" y="329" width="3" height="4" fill="#00ffff"/>
<path class="k" stroke="#00ffff" d="M300 272.5H302"/>
<path class="k" stroke="#00ffff" d="M300 335.5H302"/>
<text x="301.3" y="303.3" fill="#00ffff" stroke="#00ffff" stroke-width="0.42" font-size="7" text-anchor="middle" textLength="7.5" lengthAdjust="spacingAndGlyphs" transform="rotate(-90 301.3 303.3)">35</text>
<path class="k" stroke="#00ffff" d="M360.5 268V340"/>
<rect x="359" y="271" width="3" height="4" fill="#00ffff"/>
<rect x="359" y="333" width="3" height="4" fill="#00ffff"/>
<path class="k" stroke="#00ffff" d="M357 268.5H359"/>
<path class="k" stroke="#00ffff" d="M357 339.5H359"/>
<text x="358.3" y="303.3" fill="#00ffff" stroke="#00ffff" stroke-width="0.42" font-size="7" text-anchor="middle" textLength="7.5" lengthAdjust="spacingAndGlyphs" transform="rotate(-90 358.3 303.3)">40</text>
<path class="k" stroke="#00ffff" d="M374 261.5H385"/>
<path class="k" stroke="#00ffff" d="M374 345.5H385"/>
<path class="k" stroke="#00ffff" d="M377.5 261V346"/>
<rect x="376" y="264" width="3" height="4" fill="#00ffff"/>
<rect x="376" y="339" width="3" height="4" fill="#00ffff"/>
<text x="375.3" y="303.3" fill="#00ffff" stroke="#00ffff" stroke-width="0.42" font-size="7" text-anchor="middle" textLength="7.5" lengthAdjust="spacingAndGlyphs" transform="rotate(-90 375.3 303.3)">47</text>
<path class="k" stroke="#00ffff" d="M444.5 268V340"/>
<rect x="443" y="271" width="3" height="4" fill="#00ffff"/>
<rect x="443" y="333" width="3" height="4" fill="#00ffff"/>
<path class="k" stroke="#00ffff" d="M441 268.5H443"/>
<path class="k" stroke="#00ffff" d="M441 339.5H443"/>
<text x="442.2" y="303.3" fill="#00ffff" stroke="#00ffff" stroke-width="0.42" font-size="7" text-anchor="middle" textLength="7.5" lengthAdjust="spacingAndGlyphs" transform="rotate(-90 442.2 303.3)">40</text>
<path class="k" stroke="#00ffff" d="M564.5 236V372"/>
<rect x="563" y="239" width="3" height="4" fill="#00ffff"/>
<rect x="563" y="365" width="3" height="4" fill="#00ffff"/>
<path class="k" stroke="#00ffff" d="M561 236.5H563"/>
<path class="k" stroke="#00ffff" d="M561 371.5H563"/>
<text x="556.8" y="302.5" fill="#00ffff" stroke="#00ffff" stroke-width="0.42" font-size="7" text-anchor="middle" transform="rotate(-90 556.8 302.5)">0</text>
<text x="563.8" y="303.5" fill="#00ffff" stroke="#00ffff" stroke-width="0.42" font-size="7" text-anchor="middle" textLength="34" lengthAdjust="spacingAndGlyphs" transform="rotate(-90 563.8 303.5)">ø75.6-0.03</text>
<path class="k" stroke="#00ffff" d="M685.5 268V340"/>
<rect x="684" y="271" width="3" height="4" fill="#00ffff"/>
<rect x="684" y="333" width="3" height="4" fill="#00ffff"/>
<path class="k" stroke="#00ffff" d="M682 268.5H684"/>
<path class="k" stroke="#00ffff" d="M682 339.5H684"/>
<text x="683.5" y="303.3" fill="#00ffff" stroke="#00ffff" stroke-width="0.42" font-size="7" text-anchor="middle" textLength="7.5" lengthAdjust="spacingAndGlyphs" transform="rotate(-90 683.5 303.3)">40</text>
<path class="k" stroke="#00ffff" d="M705 261.5H724"/>
<path class="k" stroke="#00ffff" d="M705 345.5H724"/>
<path class="k" stroke="#00ffff" d="M708.5 261V346"/>
<rect x="707" y="264" width="3" height="4" fill="#00ffff"/>
<rect x="707" y="339" width="3" height="4" fill="#00ffff"/>
<text x="706.4" y="303.3" fill="#00ffff" stroke="#00ffff" stroke-width="0.42" font-size="7" text-anchor="middle" textLength="7.5" lengthAdjust="spacingAndGlyphs" transform="rotate(-90 706.4 303.3)">47</text>
<path class="k" stroke="#00ffff" d="M760.5 268V340"/>
<rect x="759" y="271" width="3" height="4" fill="#00ffff"/>
<rect x="759" y="333" width="3" height="4" fill="#00ffff"/>
<path class="k" stroke="#00ffff" d="M753 268.5H762"/>
<path class="k" stroke="#00ffff" d="M753 339.5H762"/>
<text x="749" y="299.5" fill="#00ffff" stroke="#00ffff" stroke-width="0.42" font-size="7" text-anchor="middle" textLength="19" lengthAdjust="spacingAndGlyphs" transform="rotate(-90 749 299.5)">+0.018</text>
<text x="756.3" y="304.5" fill="#00ffff" stroke="#00ffff" stroke-width="0.42" font-size="7" text-anchor="middle" textLength="32" lengthAdjust="spacingAndGlyphs" transform="rotate(-90 756.3 304.5)">ø40+0.002</text>
<path class="k" stroke="#00ffff" d="M145.5 329V487"/>
<path class="k" stroke="#00ffff" d="M148.5 304V407"/>
<path class="k" stroke="#00ffff" d="M248.5 304V407"/>
<path class="k" stroke="#00ffff" d="M252.5 329V438"/>
<path class="k" stroke="#00ffff" d="M350.5 340V464"/>
<path class="k" stroke="#00ffff" d="M386.5 346V408"/>
<path class="k" stroke="#00ffff" d="M404.5 346V408"/>
<path class="k" stroke="#00ffff" d="M490.5 342V438"/>
<path class="k" stroke="#00ffff" d="M638.5 342V438"/>
<path class="k" stroke="#00ffff" d="M725.5 346V408"/>
<path class="k" stroke="#00ffff" d="M743.5 346V408"/>
<path class="k" stroke="#00ffff" d="M782.5 337V487"/>
<path class="k" stroke="#00ffff" d="M126 403.5H147"/>
<rect x="139" y="402" width="4" height="3" fill="#00ffff"/>
<path class="k" stroke="#00ffff" d="M148 403.5H249"/>
<rect x="152" y="402" width="4" height="3" fill="#00ffff"/>
<rect x="242" y="402" width="4" height="3" fill="#00ffff"/>
<text x="129.8" y="402" fill="#00ffff" stroke="#00ffff" stroke-width="0.42" font-size="7" text-anchor="middle">2</text>
<text x="198.6" y="402" fill="#00ffff" stroke="#00ffff" stroke-width="0.42" font-size="7" text-anchor="middle" textLength="7.5" lengthAdjust="spacingAndGlyphs">54</text>
<path class="k" stroke="#00ffff" d="M350 403.5H387"/>
<rect x="354" y="402" width="4" height="3" fill="#00ffff"/>
<rect x="380" y="402" width="4" height="3" fill="#00ffff"/>
<text x="368.4" y="402" fill="#00ffff" stroke="#00ffff" stroke-width="0.42" font-size="7" text-anchor="middle" textLength="7.5" lengthAdjust="spacingAndGlyphs">20</text>
<path class="k" stroke="#00ffff" d="M386 403.5H405"/>
<rect x="390" y="402" width="4" height="3" fill="#00ffff"/>
<rect x="398" y="402" width="4" height="3" fill="#00ffff"/>
<text x="395" y="402" fill="#00ffff" stroke="#00ffff" stroke-width="0.42" font-size="7" text-anchor="middle" textLength="6.5" lengthAdjust="spacingAndGlyphs">10</text>
<path class="k" stroke="#00ffff" d="M725 403.5H744"/>
<rect x="729" y="402" width="4" height="3" fill="#00ffff"/>
<rect x="737" y="402" width="4" height="3" fill="#00ffff"/>
<text x="734.2" y="402" fill="#00ffff" stroke="#00ffff" stroke-width="0.42" font-size="7" text-anchor="middle" textLength="6.5" lengthAdjust="spacingAndGlyphs">10</text>
<path class="k" stroke="#00ffff" d="M743 403.5H783"/>
<rect x="747" y="402" width="4" height="3" fill="#00ffff"/>
<rect x="776" y="402" width="4" height="3" fill="#00ffff"/>
<text x="763" y="402" fill="#00ffff" stroke="#00ffff" stroke-width="0.42" font-size="7" text-anchor="middle" textLength="7.5" lengthAdjust="spacingAndGlyphs">22</text>
<path class="k" stroke="#00ffff" d="M145 432.5H253"/>
<rect x="149" y="431" width="4" height="3" fill="#00ffff"/>
<rect x="246" y="431" width="4" height="3" fill="#00ffff"/>
<text x="198.6" y="431" fill="#00ffff" stroke="#00ffff" stroke-width="0.42" font-size="7" text-anchor="middle" textLength="7.5" lengthAdjust="spacingAndGlyphs">60</text>
<path class="k" stroke="#00ffff" d="M350 432.5H491"/>
<rect x="354" y="431" width="4" height="3" fill="#00ffff"/>
<rect x="484" y="431" width="4" height="3" fill="#00ffff"/>
<text x="420.7" y="431" fill="#00ffff" stroke="#00ffff" stroke-width="0.42" font-size="7" text-anchor="middle" textLength="12.5" lengthAdjust="spacingAndGlyphs">78.5</text>
<path class="k" stroke="#00ffff" d="M490 432.5H639"/>
<rect x="494" y="431" width="4" height="3" fill="#00ffff"/>
<rect x="632" y="431" width="4" height="3" fill="#00ffff"/>
<text x="565" y="431" fill="#00ffff" stroke="#00ffff" stroke-width="0.42" font-size="7" text-anchor="middle" textLength="7.5" lengthAdjust="spacingAndGlyphs">83</text>
<path class="k" stroke="#00ffff" d="M145 459.5H351"/>
<rect x="149" y="458" width="4" height="3" fill="#00ffff"/>
<rect x="344" y="458" width="4" height="3" fill="#00ffff"/>
<text x="248" y="458" fill="#00ffff" stroke="#00ffff" stroke-width="0.42" font-size="7" text-anchor="middle" textLength="9.5" lengthAdjust="spacingAndGlyphs">115</text>
<path class="k" stroke="#00ffff" d="M145 482.5H783"/>
<rect x="149" y="481" width="4" height="3" fill="#00ffff"/>
<rect x="776" y="481" width="4" height="3" fill="#00ffff"/>
<text x="464" y="481" fill="#00ffff" stroke="#00ffff" stroke-width="0.42" font-size="7" text-anchor="middle" textLength="11" lengthAdjust="spacingAndGlyphs">357</text>
<path class="a" stroke="#00ffff" d="M213.1 342.8 L222.3 328.5 L226.3 335.5"/>
<path class="k" stroke="#00ffff" d="M217 335.5H228"/>
<text x="222.6" y="342.1" fill="#00ffff" stroke="#00ffff" stroke-width="0.42" font-size="6.5" text-anchor="middle" textLength="8.5" lengthAdjust="spacingAndGlyphs">6.3</text>
<path class="a" stroke="#00ffff" d="M323.3 349.8 L332.5 335.5 L336.5 342.5"/>
<path class="k" stroke="#00ffff" d="M328 342.5H338"/>
<text x="332.8" y="349.1" fill="#00ffff" stroke="#00ffff" stroke-width="0.42" font-size="6.5" text-anchor="middle" textLength="8.5" lengthAdjust="spacingAndGlyphs">3.2</text>
<path class="a" stroke="#00ffff" d="M356 353.8 L365.2 339.5 L369.2 346.5"/>
<path class="k" stroke="#00ffff" d="M360 346.5H371"/>
<text x="365.5" y="353.1" fill="#00ffff" stroke="#00ffff" stroke-width="0.42" font-size="6.5" text-anchor="middle" textLength="8.5" lengthAdjust="spacingAndGlyphs">6.3</text>
<path class="a" stroke="#00ffff" d="M419.3 353.8 L428.5 339.5 L432.5 346.5"/>
<path class="k" stroke="#00ffff" d="M424 346.5H434"/>
<text x="428.8" y="353.1" fill="#00ffff" stroke="#00ffff" stroke-width="0.42" font-size="6.5" text-anchor="middle" textLength="8.5" lengthAdjust="spacingAndGlyphs">6.3</text>
<path class="a" stroke="#00ffff" d="M576.3 385.8 L585.5 371.5 L589.5 378.5"/>
<path class="k" stroke="#00ffff" d="M581 378.5H591"/>
<text x="585.8" y="385.1" fill="#00ffff" stroke="#00ffff" stroke-width="0.42" font-size="6.5" text-anchor="middle" textLength="8.5" lengthAdjust="spacingAndGlyphs">3.2</text>
<path class="a" stroke="#00ffff" d="M644.5 374.8 L653.7 360.5 L657.7 367.5"/>
<path class="k" stroke="#00ffff" d="M649 367.5H659"/>
<text x="654" y="374.1" fill="#00ffff" stroke="#00ffff" stroke-width="0.42" font-size="6.5" text-anchor="middle" textLength="8.5" lengthAdjust="spacingAndGlyphs">1.6</text>
<path class="a" stroke="#00ffff" d="M657 353.8 L666.2 339.5 L670.2 346.5"/>
<path class="k" stroke="#00ffff" d="M661 346.5H672"/>
<text x="666.5" y="353.1" fill="#00ffff" stroke="#00ffff" stroke-width="0.42" font-size="6.5" text-anchor="middle" textLength="8.5" lengthAdjust="spacingAndGlyphs">6.3</text>
<path class="a" stroke="#00ffff" d="M759.8 353.8 L769 339.5 L773 346.5"/>
<path class="k" stroke="#00ffff" d="M764 346.5H775"/>
<text x="769.3" y="353.1" fill="#00ffff" stroke="#00ffff" stroke-width="0.42" font-size="6.5" text-anchor="middle" textLength="8.5" lengthAdjust="spacingAndGlyphs">6.3</text>
<path class="k" stroke="#00ffff" d="M187 247.5H242"/>
<path class="k" stroke="#00ffff" d="M187 259.5H242"/>
<path class="k" stroke="#00ffff" d="M187.5 247V273"/>
<path class="k" stroke="#00ffff" d="M199.5 247V273"/>
<path class="k" stroke="#00ffff" d="M228.5 247V273"/>
<path class="k" stroke="#00ffff" d="M241.5 247V260"/>
<path class="a" stroke-width="1.3" stroke="#00ffff" d="M191.75 257.1L196.35 250.7"/>
<text x="214.65" y="256" fill="#00ffff" stroke="#00ffff" stroke-width="0.42" font-size="6.8" text-anchor="middle" textLength="15" lengthAdjust="spacingAndGlyphs">0.015</text>
<text x="235.6" y="256" fill="#00ffff" stroke="#00ffff" stroke-width="0.42" font-size="6.5" text-anchor="middle" textLength="3.8" lengthAdjust="spacingAndGlyphs">A</text>
<path class="k" stroke="#00ffff" d="M187 272.5H229"/>
<circle cx="194.05" cy="266.3" r="2.3" fill="none" stroke="#00ffff" stroke-width="1"/>
<path class="a" stroke="#00ffff" d="M189.45 269.6L193.25 263M194.85 269.6L198.65 263"/>
<text x="214.45" y="268.6" fill="#00ffff" stroke="#00ffff" stroke-width="0.42" font-size="6.8" text-anchor="middle" textLength="16" lengthAdjust="spacingAndGlyphs">0.004</text>
<path class="k" stroke="#00ffff" d="M177 259.5H189"/>
<path class="k" stroke="#00ffff" d="M177.5 259V279"/>
<rect x="177" y="273" width="2" height="3" fill="#00ffff"/>
<path class="k" stroke="#00ffff" d="M375 226.5H430"/>
<path class="k" stroke="#00ffff" d="M375 238.5H430"/>
<path class="k" stroke="#00ffff" d="M375.5 226V252"/>
<path class="k" stroke="#00ffff" d="M388.5 226V252"/>
<path class="k" stroke="#00ffff" d="M417.5 226V252"/>
<path class="k" stroke="#00ffff" d="M429.5 226V239"/>
<path class="a" stroke-width="1.3" stroke="#00ffff" d="M380.15 235.9L384.75 229.5"/>
<text x="403.5" y="234.8" fill="#00ffff" stroke="#00ffff" stroke-width="0.42" font-size="6.8" text-anchor="middle" textLength="15" lengthAdjust="spacingAndGlyphs">0.015</text>
<text x="424.05" y="234.8" fill="#00ffff" stroke="#00ffff" stroke-width="0.42" font-size="6.5" text-anchor="middle" textLength="3.8" lengthAdjust="spacingAndGlyphs">A</text>
<path class="k" stroke="#00ffff" d="M375 251.5H418"/>
<circle cx="382.45" cy="245.4" r="2.3" fill="none" stroke="#00ffff" stroke-width="1"/>
<path class="a" stroke="#00ffff" d="M377.85 248.7L381.65 242.1M383.25 248.7L387.05 242.1"/>
<text x="403.3" y="247.7" fill="#00ffff" stroke="#00ffff" stroke-width="0.42" font-size="6.8" text-anchor="middle" textLength="16" lengthAdjust="spacingAndGlyphs">0.004</text>
<path class="k" stroke="#00ffff" d="M366 238.5H377"/>
<path class="k" stroke="#00ffff" d="M366.5 238V269"/>
<rect x="365" y="262" width="2" height="3" fill="#00ffff"/>
<path class="k" stroke="#00ffff" d="M582 201.5H630"/>
<path class="k" stroke="#00ffff" d="M582 214.5H630"/>
<path class="k" stroke="#00ffff" d="M582.5 201V215"/>
<path class="k" stroke="#00ffff" d="M594.5 201V215"/>
<path class="k" stroke="#00ffff" d="M617.5 201V215"/>
<path class="k" stroke="#00ffff" d="M629.5 201V215"/>
<path class="a" stroke-width="1.3" stroke="#00ffff" d="M586.3 211.5L590.9 205.1"/>
<text x="606.4" y="210.4" fill="#00ffff" stroke="#00ffff" stroke-width="0.42" font-size="6.8" text-anchor="middle" textLength="12" lengthAdjust="spacingAndGlyphs">0.04</text>
<text x="624.15" y="210.4" fill="#00ffff" stroke="#00ffff" stroke-width="0.42" font-size="6.5" text-anchor="middle" textLength="3.8" lengthAdjust="spacingAndGlyphs">A</text>
<path class="k" stroke="#00ffff" d="M582.5 214V237"/>
<rect x="581" y="231" width="2" height="3" fill="#00ffff"/>
<path class="k" stroke="#00ffff" d="M775 236.5H831"/>
<path class="k" stroke="#00ffff" d="M775 249.5H831"/>
<path class="k" stroke="#00ffff" d="M775.5 236V262"/>
<path class="k" stroke="#00ffff" d="M788.5 236V262"/>
<path class="k" stroke="#00ffff" d="M816.5 236V262"/>
<path class="k" stroke="#00ffff" d="M830.5 236V250"/>
<path class="a" stroke-width="1.3" stroke="#00ffff" d="M780.05 246.55L784.65 240.15"/>
<text x="803.05" y="245.45" fill="#00ffff" stroke="#00ffff" stroke-width="0.42" font-size="6.8" text-anchor="middle" textLength="15" lengthAdjust="spacingAndGlyphs">0.015</text>
<text x="823.9" y="245.45" fill="#00ffff" stroke="#00ffff" stroke-width="0.42" font-size="6.5" text-anchor="middle" textLength="3.8" lengthAdjust="spacingAndGlyphs">A</text>
<path class="k" stroke="#00ffff" d="M775 261.5H817"/>
<circle cx="782.35" cy="256.1" r="2.3" fill="none" stroke="#00ffff" stroke-width="1"/>
<path class="a" stroke="#00ffff" d="M777.75 259.4L781.55 252.8M783.15 259.4L786.95 252.8"/>
<text x="802.85" y="258.4" fill="#00ffff" stroke="#00ffff" stroke-width="0.42" font-size="6.8" text-anchor="middle" textLength="16" lengthAdjust="spacingAndGlyphs">0.004</text>
<path class="k" stroke="#00ffff" d="M765 249.5H777"/>
<path class="k" stroke="#00ffff" d="M765.5 249V269"/>
<rect x="765" y="262" width="2" height="3" fill="#00ffff"/>
<path class="k" stroke="#ffffff" d="M161.5 252V270"/>
<path class="k" stroke="#ffffff" d="M161 252.5H175"/>
<rect x="168" y="252" width="3" height="2" fill="#ffffff"/>
<rect x="164" y="251" width="7" height="1" fill="#ffffff"/>
<path class="a" stroke="#ffffff" d="M165.5 251V247.5H168.5V251M165.5 249.5H168.5"/>
<path class="k" stroke="#ffffff" d="M161.5 337V356"/>
<path class="k" stroke="#ffffff" d="M161 355.5H175"/>
<rect x="168" y="354" width="4" height="2" fill="#ffffff"/>
<rect x="164" y="356" width="7" height="1" fill="#ffffff"/>
<path class="a" stroke="#ffffff" d="M163.5 360.5V357.5H166.5V360.5ZM164.5 357V355.5"/>
<text x="455.5" y="246.3" fill="#00ffff" stroke="#00ffff" stroke-width="0.42" font-size="7" text-anchor="middle" textLength="9" lengthAdjust="spacingAndGlyphs">R5</text>
<path class="k" stroke="#00ffff" d="M451 250.5H466"/>
<path class="a" stroke="#00ffff" d="M464.7 250.5 L475.5 255.5"/>
<path d="M468.6 250.8L475 255.4L468.4 254.2Z" fill="#00ffff" stroke="#00ffff" stroke-width="0.7" stroke-linejoin="round"/>
<path class="a" stroke="#00ffff" d="M481 250 L475.5 255.5 L484 259.6"/>
<path class="a" stroke="#00ffff" d="M475.5 255.5C475 260 476 264 482.6 268.4"/>
<text x="679.5" y="243" fill="#00ffff" stroke="#00ffff" stroke-width="0.42" font-size="7" text-anchor="middle" textLength="9" lengthAdjust="spacingAndGlyphs">R5</text>
<path class="k" stroke="#00ffff" d="M669 247.5H684"/>
<path class="a" stroke="#00ffff" d="M669.1 247.6 L653.8 255.3"/>
<path d="M661 250.4L654.6 255.2L660.6 253.6Z" fill="#00ffff" stroke="#00ffff" stroke-width="0.7" stroke-linejoin="round"/>
<path class="a" stroke="#00ffff" d="M648 250.2 L653.8 255.3 L645 259.5"/>
<path class="a" stroke="#00ffff" d="M653.8 255.3C654.3 260 653.5 263.5 647.4 268.4"/>
<path class="k" stroke="#00ffff" d="M638.5 218V265"/>
<path class="a" stroke="#00ffff" d="M626.2 219.1 L630.9 235.5"/>
<path class="a" stroke="#00ffff" d="M616.1 231.7C622 228.3 627.5 226.2 633.6 225.6L642.4 225.6"/>
<path d="M620 229.4L626.8 225.8L622.5 230.4Z" fill="#00ffff" stroke="#00ffff" stroke-width="0.7" stroke-linejoin="round"/>
<path d="M641 224.2L650 227.4L641 227.8Z" fill="#00ffff" stroke="#00ffff" stroke-width="0.7" stroke-linejoin="round"/>
<path class="k" stroke="#00ffff" d="M648 227.5H676"/>
<text x="666.7" y="223.2" fill="#00ffff" stroke="#00ffff" stroke-width="0.42" font-size="7" text-anchor="middle" textLength="11" lengthAdjust="spacingAndGlyphs">30°</text>
<path class="a" stroke="#ffffff" stroke-width="1" d="M155.85 70.58H159M154.8 72.19H159M154.8 73.8H159M154.8 75.41H159M156.31 72.05V77.3M155.14 70.3V77.3M157.11 72.05L154.8 77.3M156.69 72.75L159 77.3M160.65 70.58H162.75M159.6 72.19H163.8M159.6 75.41H163.8M161.11 70.3V77.3M159.94 70.3V77.3M161.91 72.05L159.6 77.3"/>
<path class="a" stroke="#ffffff" d="M171.1 69.8 L175.4 77.5 L184.7 63"/>
<path class="k" stroke="#ffffff" d="M171 69.5H182"/>
<text x="176.5" y="69.3" fill="#ffffff" stroke="#ffffff" stroke-width="0.42" font-size="5.5" text-anchor="middle" textLength="9.5" lengthAdjust="spacingAndGlyphs">12.5</text>
<defs><clipPath id="cp"><path d="M307.5 596.5 L312.67 596.5 L310.46 601.6 L306.61 606.61 L301.6 610.46 L295.76 612.88 L289.5 613.7 L283.24 612.88 L277.4 610.46 L272.39 606.61 L268.54 601.6 L266.12 595.76 L265.3 589.5 L266.12 583.24 L268.54 577.4 L272.39 572.39 L277.4 568.54 L283.24 566.12 L289.5 565.3 L295.76 566.12 L301.6 568.54 L306.61 572.39 L310.46 577.4 L312.67 581.9 L307.5 581.9Z"/></clipPath></defs>
<path clip-path="url(#cp)" class="a" stroke="#ffffff" stroke-width="1" d="M186.1 629.5L266.1 549.5M194.1 629.5L274.1 549.5M202.1 629.5L282.1 549.5M210.1 629.5L290.1 549.5M218.1 629.5L298.1 549.5M226.1 629.5L306.1 549.5M234.1 629.5L314.1 549.5M242.1 629.5L322.1 549.5M250.1 629.5L330.1 549.5M258.1 629.5L338.1 549.5M266.1 629.5L346.1 549.5M274.1 629.5L354.1 549.5M282.1 629.5L362.1 549.5M290.1 629.5L370.1 549.5M298.1 629.5L378.1 549.5M306.1 629.5L386.1 549.5M314.1 629.5L394.1 549.5"/>
<path class="a" stroke="#00ff00" d="M307.5 596.5 L312.67 596.5 L310.46 601.6 L306.61 606.61 L301.6 610.46 L295.76 612.88 L289.5 613.7 L283.24 612.88 L277.4 610.46 L272.39 606.61 L268.54 601.6 L266.12 595.76 L265.3 589.5 L266.12 583.24 L268.54 577.4 L272.39 572.39 L277.4 568.54 L283.24 566.12 L289.5 565.3 L295.76 566.12 L301.6 568.54 L306.61 572.39 L310.46 577.4 L312.67 581.9 L307.5 581.9Z"/>
<path class="k" stroke="#ff0000" d="M289.5 547V633"/>
<path class="k" stroke="#ff0000" d="M243 589.5H276"/>
<path class="k" stroke="#ff0000" d="M286 589.5H298"/>
<path class="k" stroke="#ff0000" d="M308 589.5H342"/>
<text x="290" y="539" fill="#ffffff" stroke="#ffffff" stroke-width="0.42" font-size="7" text-anchor="middle" textLength="11.5" lengthAdjust="spacingAndGlyphs">B-B</text>
<path class="k" stroke="#00ffff" d="M322 535.5H382"/>
<path class="k" stroke="#00ffff" d="M322 548.5H382"/>
<path class="k" stroke="#00ffff" d="M322.5 535V549"/>
<path class="k" stroke="#00ffff" d="M334.5 535V549"/>
<path class="k" stroke="#00ffff" d="M369.5 535V549"/>
<path class="k" stroke="#00ffff" d="M381.5 535V549"/>
<path class="k" stroke="#00ffff" d="M326 539.5H331"/>
<path class="k" stroke="#00ffff" d="M324 541.5H334"/>
<path class="k" stroke="#00ffff" d="M326 543.5H331"/>
<text x="352.5" y="544.7" fill="#00ffff" stroke="#00ffff" stroke-width="0.42" font-size="7" text-anchor="middle" textLength="19" lengthAdjust="spacingAndGlyphs">0.0025</text>
<text x="376" y="544.7" fill="#00ffff" stroke="#00ffff" stroke-width="0.42" font-size="7" text-anchor="middle" textLength="4" lengthAdjust="spacingAndGlyphs">A</text>
<path class="k" stroke="#00ffff" d="M319 541.5H324"/>
<path class="k" stroke="#00ffff" d="M319.5 541V584"/>
<rect x="318" y="576" width="3" height="3" fill="#00ffff"/>
<path class="k" stroke="#00ffff" d="M314 582.5H344"/>
<path class="k" stroke="#00ffff" d="M314 596.5H344"/>
<path class="k" stroke="#00ffff" d="M335.5 569V611"/>
<path class="k" stroke="#00ffff" d="M335 569.5H363"/>
<rect x="334" y="576" width="3" height="3" fill="#00ffff"/>
<rect x="334" y="599" width="3" height="4" fill="#00ffff"/>
<text x="344.8" y="557.7" fill="#00ffff" stroke="#00ffff" stroke-width="0.42" font-size="6.5" text-anchor="middle">0</text>
<text x="351.5" y="564.8" fill="#00ffff" stroke="#00ffff" stroke-width="0.42" font-size="7" text-anchor="middle" textLength="23" lengthAdjust="spacingAndGlyphs">8-0.039</text>
<path class="a" stroke="#00ffff" d="M312.5 610.8 L321.7 596.5 L325.7 603.5"/>
<path class="k" stroke="#00ffff" d="M317 603.5H327"/>
<text x="322" y="610.1" fill="#00ffff" stroke="#00ffff" stroke-width="0.42" font-size="6.5" text-anchor="middle" textLength="8.5" lengthAdjust="spacingAndGlyphs">3.2</text>
<path class="a" stroke="#00ffff" d="M308 620 L314.5 616.5 L314.5 623.5Z"/>
<path class="a" stroke="#00ffff" d="M313 616.5 L320 616.5"/>
<path class="a" stroke="#00ffff" d="M313 622 L321.5 629"/>
<text x="317.5" y="621.5" fill="#00ffff" stroke="#00ffff" stroke-width="0.42" font-size="5.5" text-anchor="middle">B</text>
<path class="k" stroke="#00ffff" d="M264.5 590V646"/>
<path class="k" stroke="#00ffff" d="M307.5 597V646"/>
<path class="k" stroke="#00ffff" d="M264 636.5H308"/>
<rect x="268" y="635" width="4" height="3" fill="#00ffff"/>
<rect x="301" y="635" width="4" height="3" fill="#00ffff"/>
<text x="283.3" y="624.6" fill="#00ffff" stroke="#00ffff" stroke-width="0.42" font-size="6.5" text-anchor="middle">0</text>
<text x="286.2" y="631.5" fill="#00ffff" stroke="#00ffff" stroke-width="0.42" font-size="7" text-anchor="middle" textLength="24" lengthAdjust="spacingAndGlyphs">24-0.20</text>
<path class="a" stroke="#ffffff" stroke-width="1" d="M476 565.26H479.15M477.05 566.75H479.15M476 568.25H479.15M476 569.75H480.2M479.86 565V570.2M476.34 565V571.5M477.51 566.62V571.5M480.7 565.26H484.9M481.75 566.75H484.9M481.75 568.25H483.85M481.04 566.62V571.5M483.39 566.62V570.2M485.4 565.26H488.55M485.4 568.25H489.6M485.4 569.75H489.6M485.74 565V571.5M486.91 565V571.5M488.09 566.62V571.5M487.71 566.62L485.4 571.5M487.29 567.27L489.6 571.5M491.15 565.26H494.3M490.1 568.25H494.3M490.1 571.24H493.25M491.61 565V570.2M493.96 565V570.2"/>
<text x="441.7" y="581.9" fill="#ffffff" stroke="#ffffff" stroke-width="0.5" font-size="7.3" text-anchor="start">1.</text>
<path class="a" stroke="#ffffff" stroke-width="1" d="M449.05 575.66H452.2M448 578.65H452.2M448 580.14H452.2M448 581.64H451.15M449.51 577.02V580.6M448.34 577.02V580.6M451.86 575.4V581.9M450.31 577.02L448 581.9M449.89 577.67L452.2 581.9M453.65 577.15H455.75M453.65 580.14H455.75M452.6 581.64H455.75M455.29 575.4V581.9M454.11 575.4V581.9M454.91 577.02L452.6 581.9M454.49 577.67L456.8 581.9"/>
<path class="a" stroke="#ffffff" stroke-width="1" d="M458.07 575.66H460.7M458.07 577.15H460.7M458.07 580.14H460.7M459.44 575.4V580.6M460.42 575.4V581.9"/>
<text x="461.1" y="581.9" fill="#ffffff" stroke="#ffffff" stroke-width="0.5" font-size="7.3" text-anchor="start" textLength="6.5" lengthAdjust="spacingAndGlyphs">45</text>
<path class="a" stroke="#ffffff" stroke-width="1" d="M468.1 575.66H472.3M468.1 577.15H472.3M469.15 581.64H471.25M470.79 575.4V581.9M469.61 575.4V581.9M470.41 577.02L468.1 581.9M469.99 577.67L472.3 581.9M472.7 577.15H476.9M472.7 580.14H476.9M472.7 581.64H476.9M475.39 575.4V581.9M476.56 575.4V580.6M475.01 577.02L472.7 581.9M474.59 577.67L476.9 581.9"/>
<path class="a" stroke="#ffffff" stroke-width="1" d="M481.85 575.66H485M481.85 577.15H485M480.8 580.14H485M482.31 577.02V581.9M483.49 577.02V580.6M483.11 577.02L480.8 581.9M482.69 577.67L485 581.9M485.4 575.66H489.6M485.4 577.15H489.6M486.45 578.65H489.6M485.4 580.14H489.6M486.91 577.02V580.6M489.26 575.4V581.9M487.71 577.02L485.4 581.9M487.29 577.67L489.6 581.9M490 575.66H494.2M491.05 578.65H493.15M490 580.14H493.15M491.05 581.64H493.15M493.86 575.4V580.6M491.51 575.4V581.9M492.69 575.4V580.6M492.31 577.02L490 581.9M491.89 577.67L494.2 581.9M494.6 577.15H497.75M495.65 578.65H497.75M494.6 580.14H498.8M494.94 575.4V581.9M496.11 575.4V581.9M498.46 575.4V581.9M496.91 577.02L494.6 581.9M496.49 577.67L498.8 581.9"/>
<path class="a" stroke="#ffffff" stroke-width="1" d="M503.2 575.66H507.4M503.2 577.15H507.4M503.2 578.65H506.35M504.71 577.02V581.9M503.54 575.4V580.6M508.85 575.66H510.95M508.85 577.15H512M507.8 578.65H512M507.8 580.14H512M509.31 575.4V581.9M510.49 575.4V581.9M510.11 577.02L507.8 581.9M509.69 577.67L512 581.9M512.4 575.66H516.6M512.4 578.65H516.6M512.4 580.14H515.55M513.45 581.64H515.55M513.91 577.02V581.9M515.09 575.4V581.9M512.74 575.4V581.9M514.71 577.02L512.4 581.9M514.29 577.67L516.6 581.9M517 575.66H521.2M518.05 577.15H521.2M518.05 580.14H521.2M517 581.64H520.15M520.86 575.4V580.6M519.69 577.02V581.9M518.51 577.02V580.6M519.31 577.02L517 581.9M518.89 577.67L521.2 581.9"/>
<text x="521.6" y="581.9" fill="#ffffff" stroke="#ffffff" stroke-width="0.5" font-size="7.3" text-anchor="start" textLength="33" lengthAdjust="spacingAndGlyphs">45-55HRC</text>
<text x="441.7" y="591.9" fill="#ffffff" stroke="#ffffff" stroke-width="0.5" font-size="7.3" text-anchor="start">2.</text>
<path class="a" stroke="#ffffff" stroke-width="1" d="M451 585.66H454.15M451 587.15H455.2M451 588.65H455.2M451 591.64H455.2M451.34 587.02V591.9M452.51 585.4V591.9M453.31 587.02L451 591.9M455.5 585.66H459.7M456.55 587.15H459.7M456.55 591.64H459.7M458.19 585.4V591.9M457.01 585.4V591.9M455.84 587.02V591.9M457.81 587.02L455.5 591.9M457.39 587.67L459.7 591.9M460 587.15H464.2M461.05 588.65H463.15M460 590.14H463.15M460 591.64H464.2M462.69 585.4V591.9M461.51 587.02V591.9M463.86 585.4V590.6M462.31 587.02L460 591.9M461.89 587.67L464.2 591.9M465.55 585.66H467.65M464.5 587.15H468.7M465.55 588.65H468.7M465.55 591.64H467.65M464.84 585.4V591.9M466.01 585.4V591.9M468.36 587.02V591.9M466.81 587.02L464.5 591.9M466.39 587.67L468.7 591.9M469 585.66H473.2M470.05 588.65H473.2M469 590.14H473.2M471.69 585.4V590.6M469.34 585.4V591.9M470.51 585.4V590.6M471.31 587.02L469 591.9M470.89 587.67L473.2 591.9M473.5 585.66H476.65M473.5 588.65H476.65M474.55 590.14H477.7M473.84 587.02V591.9M477.36 585.4V590.6M475.81 587.02L473.5 591.9M475.39 587.67L477.7 591.9M478 585.66H482.2M479.05 587.15H482.2M478 590.14H482.2M481.86 587.02V591.9M478.34 587.02V591.9M480.69 587.02V591.9M480.31 587.02L478 591.9"/>
<text x="482.5" y="591.9" fill="#ffffff" stroke="#ffffff" stroke-width="0.5" font-size="7.3" text-anchor="start" textLength="13.5" lengthAdjust="spacingAndGlyphs">R1.5;</text>
<text x="441.7" y="602" fill="#ffffff" stroke="#ffffff" stroke-width="0.5" font-size="7.3" text-anchor="start">3.</text>
<path class="a" stroke="#ffffff" stroke-width="1" d="M452.05 595.76H454.15M451 597.25H455.2M452.05 598.75H454.15M452.05 601.74H455.2M454.86 595.5V602M451.34 597.12V600.7M453.69 595.5V602M453.31 597.12L451 602M452.89 597.77L455.2 602M456.55 595.76H458.65M455.5 597.25H458.65M455.5 598.75H459.7M459.36 595.5V600.7M457.01 597.12V600.7M457.81 597.12L455.5 602M457.39 597.77L459.7 602M460 595.76H463.15M460 597.25H464.2M461.05 598.75H464.2M461.05 600.25H464.2M462.69 597.12V600.7M463.86 595.5V600.7M460.34 595.5V602M462.31 597.12L460 602M465.55 595.76H468.7M465.55 600.25H468.7M464.5 601.74H467.65M468.36 597.12V602M467.19 595.5V602M466.81 597.12L464.5 602M466.39 597.77L468.7 602M469 595.76H473.2M469 597.25H473.2M470.05 600.25H473.2M469 601.74H473.2M469.34 595.5V602M472.86 597.12V600.7M471.69 595.5V602M471.31 597.12L469 602M470.89 597.77L473.2 602"/>
<text x="473.5" y="602" fill="#ffffff" stroke="#ffffff" stroke-width="0.5" font-size="7.3" text-anchor="start" textLength="13.5" lengthAdjust="spacingAndGlyphs">C1.5;</text>
<text x="441.7" y="613" fill="#ffffff" stroke="#ffffff" stroke-width="0.5" font-size="7.3" text-anchor="start">4.</text>
<path class="a" stroke="#ffffff" stroke-width="1" d="M452.05 606.76H454.15M451 609.75H455.2M451 612.74H455.2M454.86 606.5V613M452.51 606.5V613M455.5 606.76H459.7M456.55 609.75H459.7M456.55 611.25H459.7M458.19 608.12V611.7M455.84 608.12V611.7M457.81 608.12L455.5 613M457.39 608.77L459.7 613M460 606.76H464.2M461.05 608.25H464.2M461.05 609.75H464.2M460.34 606.5V611.7M461.51 606.5V613M463.86 608.12V613M464.5 606.76H467.65M464.5 608.25H467.65M464.5 609.75H468.7M464.84 606.5V613M468.36 606.5V613M466.01 606.5V613M466.81 608.12L464.5 613M466.39 608.77L468.7 613M470.05 606.76H473.2M470.05 608.25H473.2M469 609.75H473.2M469 611.25H473.2M470.51 606.5V611.7M472.86 606.5V611.7M471.31 608.12L469 613M473.5 608.25H476.65M473.5 609.75H477.7M473.5 611.25H476.65M476.19 608.12V613M475.01 606.5V611.7M475.81 608.12L473.5 613M478 606.76H482.2M478 608.25H482.2M478 609.75H482.2M480.69 608.12V613M481.86 608.12V613M480.31 608.12L478 613M479.89 608.77L482.2 613M482.5 606.76H485.65M483.55 609.75H485.65M483.55 611.25H486.7M484.01 606.5V613M482.84 608.12V613M484.81 608.12L482.5 613M488.05 606.76H490.15M487 608.25H490.15M488.05 611.25H490.15M487 612.74H491.2M489.69 608.12V613M488.51 606.5V611.7M489.31 608.12L487 613M491.5 606.76H495.7M491.5 609.75H494.65M492.55 612.74H495.7M495.36 606.5V611.7M491.84 606.5V613M493.01 608.12V613"/>
<text x="496" y="613" fill="#ffffff" stroke="#ffffff" stroke-width="0.5" font-size="7.3" text-anchor="start" textLength="14" lengthAdjust="spacingAndGlyphs">IT12.</text>
</svg></body></html>
